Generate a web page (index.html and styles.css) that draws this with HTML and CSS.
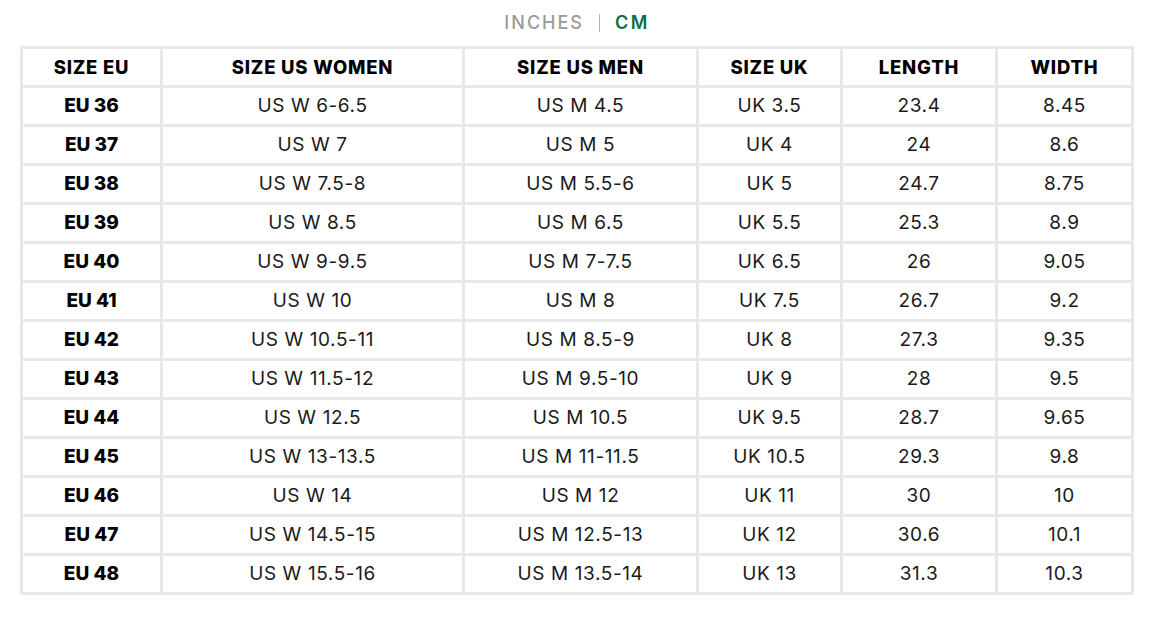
FILE: index.html
```html
<!DOCTYPE html>
<html>
<head>
<meta charset="utf-8">
<link rel="stylesheet" href="styles.css">
</head>
<body>
<div class="page">
  <div class="units">
    <span class="unit">INCHES</span>
    <span class="sep"></span>
    <span class="unit active">CM</span>
  </div>
  <table class="chart">
    <colgroup>
      <col class="c1"><col class="c2"><col class="c3"><col class="c4"><col class="c5"><col class="c6">
    </colgroup>
    <thead>
      <tr><th>SIZE EU</th><th>SIZE US WOMEN</th><th>SIZE US MEN</th><th>SIZE UK</th><th>LENGTH</th><th>WIDTH</th></tr>
    </thead>
    <tbody>
      <tr><th>EU 36</th><td>US W 6-6.5</td><td>US M 4.5</td><td>UK 3.5</td><td>23.4</td><td>8.45</td></tr>
      <tr><th>EU 37</th><td>US W 7</td><td>US M 5</td><td>UK 4</td><td>24</td><td>8.6</td></tr>
      <tr><th>EU 38</th><td>US W 7.5-8</td><td>US M 5.5-6</td><td>UK 5</td><td>24.7</td><td>8.75</td></tr>
      <tr><th>EU 39</th><td>US W 8.5</td><td>US M 6.5</td><td>UK 5.5</td><td>25.3</td><td>8.9</td></tr>
      <tr><th>EU 40</th><td>US W 9-9.5</td><td>US M 7-7.5</td><td>UK 6.5</td><td>26</td><td>9.05</td></tr>
      <tr><th>EU 41</th><td>US W 10</td><td>US M 8</td><td>UK 7.5</td><td>26.7</td><td>9.2</td></tr>
      <tr><th>EU 42</th><td>US W 10.5-11</td><td>US M 8.5-9</td><td>UK 8</td><td>27.3</td><td>9.35</td></tr>
      <tr><th>EU 43</th><td>US W 11.5-12</td><td>US M 9.5-10</td><td>UK 9</td><td>28</td><td>9.5</td></tr>
      <tr><th>EU 44</th><td>US W 12.5</td><td>US M 10.5</td><td>UK 9.5</td><td>28.7</td><td>9.65</td></tr>
      <tr><th>EU 45</th><td>US W 13-13.5</td><td>US M 11-11.5</td><td>UK 10.5</td><td>29.3</td><td>9.8</td></tr>
      <tr><th>EU 46</th><td>US W 14</td><td>US M 12</td><td>UK 11</td><td>30</td><td>10</td></tr>
      <tr><th>EU 47</th><td>US W 14.5-15</td><td>US M 12.5-13</td><td>UK 12</td><td>30.6</td><td>10.1</td></tr>
      <tr><th>EU 48</th><td>US W 15.5-16</td><td>US M 13.5-14</td><td>UK 13</td><td>31.3</td><td>10.3</td></tr>
    </tbody>
  </table>
</div>
</body>
</html>
```
FILE: styles.css
```css
html, body {
  margin: 0;
  padding: 0;
  background: #ffffff;
}
body {
  font-family: Inter, "Open Sans", sans-serif;
  color: #1a1a1a;
}
.page {
  padding: 11px 20px 0 20px;
}
.units {
  display: flex;
  justify-content: center;
  align-items: center;
  gap: 15px;
  height: 23px;
  margin-bottom: 12px;
  margin-right: 4px;
}
.unit {
  font-size: 18px;
  font-weight: 500;
  letter-spacing: 2px;
  color: #9a9a9a;
}
.unit.active {
  color: #0e6b4a;
  font-weight: 600;
  letter-spacing: 2.4px;
}
.sep {
  width: 1px;
  height: 18px;
  background: #b5b5b5;
}
.chart {
  border-collapse: collapse;
  width: 1111px;
  table-layout: fixed;
}
.c1 { width: 140px; }
.c2 { width: 302px; }
.c3 { width: 234px; }
.c4 { width: 144px; }
.c5 { width: 155px; }
.c6 { width: 136px; }
.chart th, .chart td {
  border: 3px solid #e8e8e8;
  height: 36px;
  padding: 0;
  text-align: center;
  vertical-align: middle;
  font-size: 19px;
  line-height: 36px;
}
.chart th {
  font-weight: 800;
  color: #000;
}
.chart thead th {
  font-size: 18.5px;
  letter-spacing: 0.8px;
}
.chart td {
  font-weight: 400;
  letter-spacing: 0.6px;
  color: #1a1a1a;
}
```
